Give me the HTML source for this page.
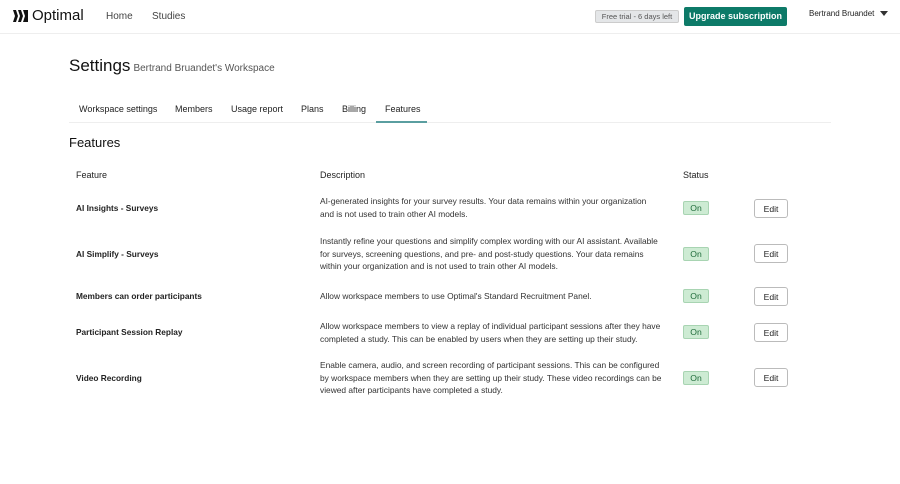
<!DOCTYPE html>
<html><head><style>
*{margin:0;padding:0;box-sizing:border-box}
body{width:900px;height:484px;background:#fff;font-family:"Liberation Sans",sans-serif;color:#222;position:relative;overflow:hidden}
.a{position:absolute;white-space:nowrap}
.nav{font-size:10px;color:#444}
.tab{font-size:9px;color:#222;top:104px}
.feat{font-size:8.3px;font-weight:bold;left:76px;color:#222}
.desc{font-size:8.4px;left:320px;line-height:12.5px;color:#333}
.on{left:683px;width:26px;height:14px;background:#cdebd3;border:1px solid #a8d4b2;border-radius:2px;font-size:8.6px;color:#1f6b3a;text-align:center;line-height:12px}
.edit{left:754px;width:34px;height:19px;border:1px solid #bbb;border-radius:3px;font-size:8.6px;text-align:center;line-height:18px;color:#222}
</style></head><body>
<div class="a" style="left:0;top:33px;width:900px;height:1px;background:#eee"></div>
<svg class="a" style="left:13px;top:9px" width="16" height="14" viewBox="0 0 16 14"><path d="M0 1h3l2 6-2 6H0l2-6z M5 1h3l2 6-2 6H5l2-6z M10 1h5v12h-5l2-6z" fill="#111"/></svg>
<div class="a" style="left:32px;top:7px;font-size:15px;color:#111">Optimal</div>
<div class="a nav" style="left:106px;top:11px">Home</div>
<div class="a nav" style="left:152px;top:11px">Studies</div>
<div class="a" style="left:595px;top:10px;width:84px;height:13px;background:#e4e6e8;border:1px solid #ccc;border-radius:2px;font-size:7.5px;color:#555;text-align:center;line-height:11px">Free trial - 6 days left</div>
<div class="a" style="left:684px;top:7px;width:103px;height:19px;background:#0d7a68;border-radius:2px;font-size:9px;font-weight:bold;color:#fff;text-align:center;line-height:19px">Upgrade subscription</div>
<div class="a" style="left:809px;top:9px;font-size:8px;color:#222">Bertrand Bruandet</div>
<div class="a" style="left:880px;top:11px;width:0;height:0;border-left:4px solid transparent;border-right:4px solid transparent;border-top:5px solid #333"></div>
<div class="a" style="left:69px;top:56px;font-size:17px;color:#111">Settings<span style="font-size:10px;color:#555;margin-left:3px">Bertrand Bruandet's Workspace</span></div>
<div class="a tab" style="left:79px">Workspace settings</div>
<div class="a tab" style="left:175px">Members</div>
<div class="a tab" style="left:231px">Usage report</div>
<div class="a tab" style="left:301px">Plans</div>
<div class="a tab" style="left:342px">Billing</div>
<div class="a tab" style="left:385px">Features</div>
<div class="a" style="left:69px;top:122px;width:762px;height:1px;background:#eee"></div>
<div class="a" style="left:376px;top:121px;width:51px;height:2px;background:#5a9ea0"></div>
<div class="a" style="left:69px;top:135px;font-size:13px;color:#111">Features</div>
<div class="a" style="left:76px;top:170px;font-size:9px">Feature</div>
<div class="a" style="left:320px;top:170px;font-size:9px">Description</div>
<div class="a" style="left:683px;top:170px;font-size:9px">Status</div>

<div class="a feat" style="top:203px">AI Insights - Surveys</div>
<div class="a desc" style="top:195px">AI-generated insights for your survey results. Your data remains within your organization<br>and is not used to train other AI models.</div>
<div class="a on" style="top:201px">On</div><div class="a edit" style="top:199px">Edit</div>

<div class="a feat" style="top:249px">AI Simplify - Surveys</div>
<div class="a desc" style="top:235px">Instantly refine your questions and simplify complex wording with our AI assistant. Available<br>for surveys, screening questions, and pre- and post-study questions. Your data remains<br>within your organization and is not used to train other AI models.</div>
<div class="a on" style="top:247px">On</div><div class="a edit" style="top:244px">Edit</div>

<div class="a feat" style="top:291px">Members can order participants</div>
<div class="a desc" style="top:290px">Allow workspace members to use Optimal's Standard Recruitment Panel.</div>
<div class="a on" style="top:289px">On</div><div class="a edit" style="top:287px">Edit</div>

<div class="a feat" style="top:327px">Participant Session Replay</div>
<div class="a desc" style="top:320px">Allow workspace members to view a replay of individual participant sessions after they have<br>completed a study. This can be enabled by users when they are setting up their study.</div>
<div class="a on" style="top:325px">On</div><div class="a edit" style="top:323px">Edit</div>

<div class="a feat" style="top:373px">Video Recording</div>
<div class="a desc" style="top:359px">Enable camera, audio, and screen recording of participant sessions. This can be configured<br>by workspace members when they are setting up their study. These video recordings can be<br>viewed after participants have completed a study.</div>
<div class="a on" style="top:371px">On</div><div class="a edit" style="top:368px">Edit</div>
</body></html>
